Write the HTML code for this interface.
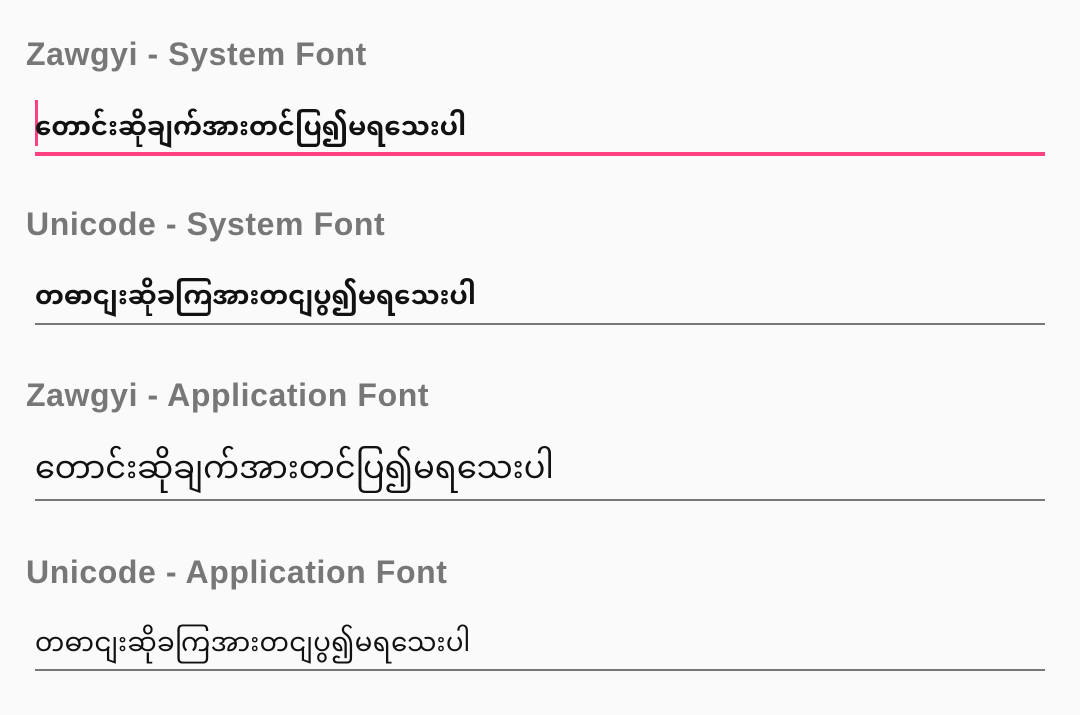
<!DOCTYPE html>
<html><head><meta charset="utf-8"><style>
body{margin:0;width:1080px;height:715px;background:#fafafa;position:relative;overflow:hidden;font-family:"Liberation Sans",sans-serif}
.l{position:absolute;left:26px;font-size:32px;font-weight:bold;color:#777;line-height:1;letter-spacing:0.6px}
.t{position:absolute;left:35px;color:#111;line-height:1;white-space:nowrap;font-family:"Noto Sans Myanmar","Padauk","Myanmar Text","DejaVu Sans",sans-serif}
.u{position:absolute;left:35px;width:1010px;height:2px;background:#777}
</style></head><body>
<div class="l" style="top:38px">Zawgyi - System Font</div>
<div style="position:absolute;left:35px;top:100px;width:3px;height:46px;background:#ff4081"></div>
<div class="t" style="top:117px;font-size:26px;font-weight:bold">တောင်းဆိုချက်အားတင်ပြ၍မရသေးပါ</div>
<div class="u" style="top:152px;height:4px;background:#ff4081"></div>
<div class="l" style="top:208px">Unicode - System Font</div>
<div class="t" style="top:286px;font-size:26px;font-weight:bold">တဓာငျးဆိုခကြအားတငျပွ၍မရသေးပါ</div>
<div class="u" style="top:323px"></div>
<div class="l" style="top:379px">Zawgyi - Application Font</div>
<div class="t" style="top:455px;font-size:32px">တောင်းဆိုချက်အားတင်ပြ၍မရသေးပါ</div>
<div class="u" style="top:499px"></div>
<div class="l" style="top:556px">Unicode - Application Font</div>
<div class="t" style="top:633px;font-size:26px;letter-spacing:0.4px">တဓာငျးဆိုခကြအားတငျပွ၍မရသေးပါ</div>
<div class="u" style="top:669px"></div>
</body></html>
